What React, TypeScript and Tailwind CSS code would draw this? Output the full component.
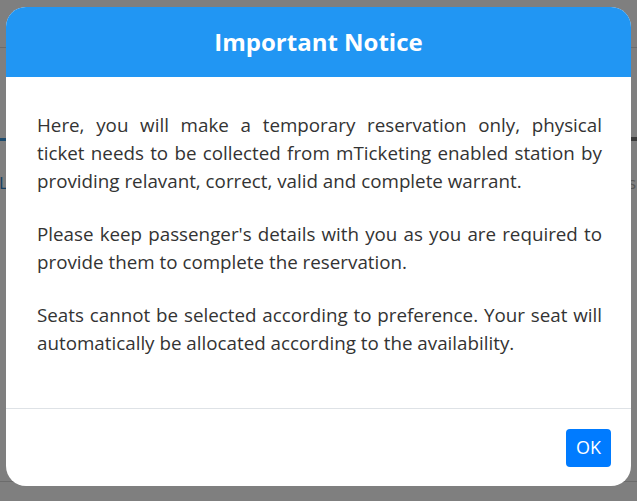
import React from "react";

const font = { fontFamily: '"Open Sans", "Noto Sans", Arial, sans-serif' };

function Line({ children, justify }: { children: React.ReactNode; justify?: boolean }) {
  return (
    <div
      className={
        justify
          ? "whitespace-nowrap text-justify [text-align-last:justify]"
          : "whitespace-nowrap text-left"
      }
    >
      {children}
    </div>
  );
}

export default function App() {
  return (
    <div className="relative h-[501px] w-full overflow-hidden bg-white" style={font}>
      {/* background page */}
      <div className="flex h-full flex-col">
        <div className="h-[48px] border-b border-[#d8d8d8]" />
        <div className="flex h-[93px] items-end">
          <div className="h-[3px] w-[40px] bg-[#3a98dc]" />
          <div className="h-[3px] flex-1 bg-[#e8e8e8]" />
          <div className="h-[4px] w-[40px] bg-[#777777]" />
        </div>
        <div className="mt-[32px] flex items-center justify-between text-[17px] leading-[20px]">
          <span className="-ml-[1px] text-[#2c7fc4]">L</span>
          <span className="pr-[1px] text-[#b0b0b0]">s</span>
        </div>
        <div className="mt-[288px] border-b border-[#d8d8d8]" />
      </div>

      {/* overlay */}
      <div className="absolute inset-0 bg-black/50" />

      {/* modal */}
      <div className="absolute left-[6px] top-[7px] flex h-[479px] w-[625px] flex-col overflow-hidden rounded-[20px] bg-white">
        <div className="flex h-[70px] items-center justify-center bg-[#2196f3]">
          <h1 className="text-[24px] font-bold text-white">Important Notice</h1>
        </div>
        <div className="flex-1 pl-[31px] pr-[29px] pt-[34px] text-[18.8px] leading-[28px] text-[#333333]">
          <div className="mb-[25px]">
            <Line justify>Here, you will make a temporary reservation only, physical</Line>
            <Line justify>ticket needs to be collected from mTicketing enabled station by</Line>
            <Line>providing relavant, correct, valid and complete warrant.</Line>
          </div>
          <div className="mb-[25px]">
            <Line justify>Please keep passenger's details with you as you are required to</Line>
            <Line>provide them to complete the reservation.</Line>
          </div>
          <div>
            <Line justify>Seats cannot be selected according to preference. Your seat will</Line>
            <Line>automatically be allocated according to the availability.</Line>
          </div>
        </div>
        <div className="flex h-[78px] items-center justify-end border-t border-[#dee2e6] pr-[20px]">
          <button className="flex h-[38px] w-[45px] items-center justify-center rounded-[4px] bg-[#007bff] text-[18px] text-white">
            OK
          </button>
        </div>
      </div>
    </div>
  );
}
